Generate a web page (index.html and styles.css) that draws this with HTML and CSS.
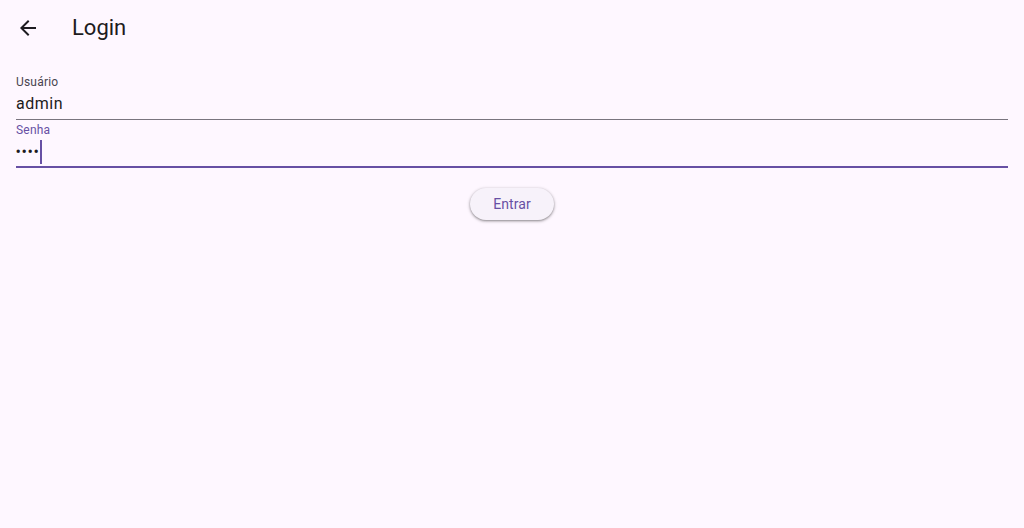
FILE: index.html
```html
<!DOCTYPE html>
<html lang="pt">
<head>
<meta charset="utf-8">
<title>Login</title>
<link rel="stylesheet" href="styles.css">
</head>
<body>
<header class="appbar">
  <button class="back" aria-label="Voltar">
    <svg width="24" height="24" viewBox="0 0 24 24"><path d="M20 11H7.83l5.59-5.59L12 4l-8 8 8 8 1.41-1.41L7.83 13H20v-2z" fill="#1d1b20"/></svg>
  </button>
  <h1 class="title">Login</h1>
</header>
<main class="content">
  <div class="field">
    <label class="label">Usuário</label>
    <div class="value">admin</div>
  </div>
  <div class="field focused">
    <label class="label">Senha</label>
    <div class="value"><span class="dots">••••</span><span class="cursor"></span></div>
  </div>
  <div class="actions">
    <button class="btn">Entrar</button>
  </div>
</main>
</body>
</html>
```
FILE: styles.css
```css
* { box-sizing: border-box; }
html, body {
  margin: 0;
  background: #fef7ff;
  font-family: Roboto, "Noto Sans", sans-serif;
  color: #1d1b20;
  height: 100%;
}
.appbar {
  height: 56px;
  display: flex;
  align-items: center;
  padding: 0 4px;
}
.back {
  width: 48px;
  height: 48px;
  border: 0;
  background: none;
  padding: 0;
  display: flex;
  align-items: center;
  justify-content: center;
}
.title {
  margin: 0 0 0 20px;
  font-size: 22px;
  font-weight: 400;
  line-height: 28px;
}
.content {
  padding: 16px 16px;
}
.field {
  height: 48px;
  border-bottom: 1px solid #79747e;
  display: flex;
  flex-direction: column;
  padding-top: 2px;
}
.field.focused {
  border-bottom: 2px solid #6750a4;
}
.label {
  font-size: 12px;
  line-height: 16px;
  color: #49454f;
  letter-spacing: 0.2px;
}
.focused .label { color: #6750a4; }
.value {
  font-size: 16px;
  line-height: 24px;
  letter-spacing: 0.5px;
  display: flex;
  align-items: center;
  margin-top: 2px;
}
.dots {
  font-size: 16px;
  letter-spacing: 0.6px;
  margin-left: -0.5px;
}
.cursor {
  display: inline-block;
  width: 2px;
  height: 24px;
  background: #6750a4;
  margin-left: 0;
}
.actions {
  display: flex;
  justify-content: center;
  padding-top: 20px;
}
.btn {
  height: 32px;
  padding: 0 23px;
  border: 0;
  border-radius: 16px;
  background: #f7f2fa;
  color: #6750a4;
  font-family: Roboto, "Noto Sans", sans-serif;
  font-size: 14px;
  font-weight: 400;
  letter-spacing: 0.1px;
  box-shadow: 0 1px 2px rgba(0,0,0,0.3), 0 1px 3px 1px rgba(0,0,0,0.15);
}
```
